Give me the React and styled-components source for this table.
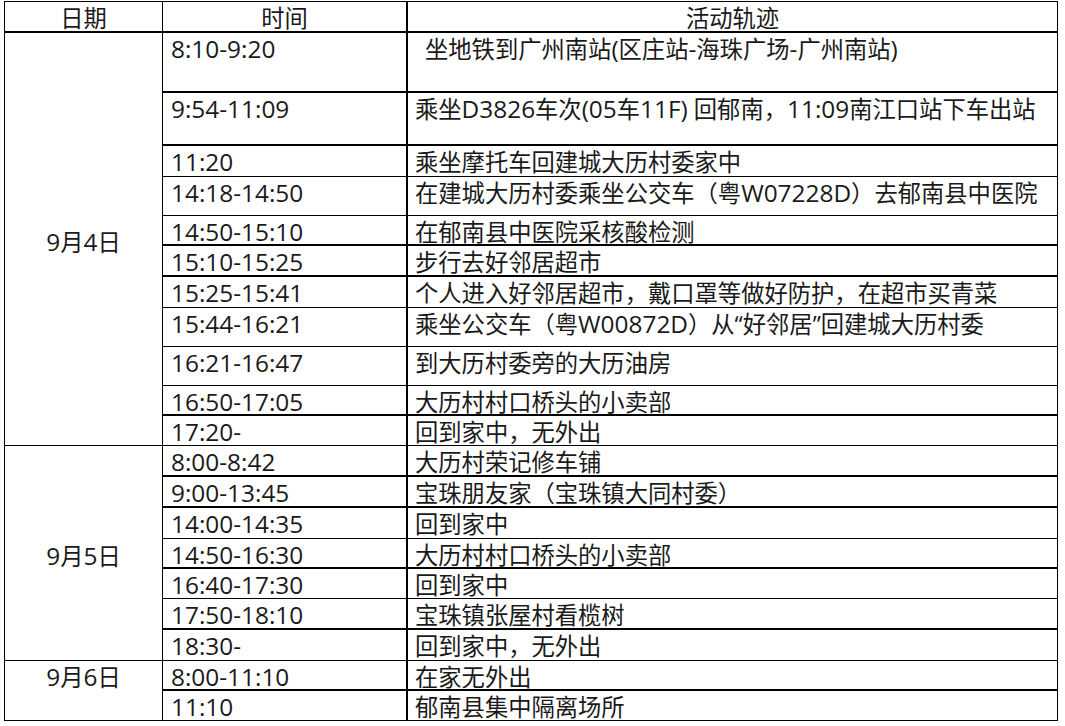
import React from "react";
import styled, { createGlobalStyle } from "styled-components";

const Global = createGlobalStyle`
  html, body { margin: 0; padding: 0; background: #ffffff; }
  body {
    font-family: "Open Sans", "Noto Sans CJK SC", sans-serif;
    color: #1a1a1a;
  }
`;

const Page = styled.div`
  padding: 1px 0 0 4px;
`;

const Table = styled.div`
  display: grid;
  grid-template-columns: 158px 245px 650px;
  grid-template-rows: ${(p) => p.$rows};
  width: max-content;
  border-top: 1px solid #000;
  border-left: 1px solid #000;
  font-size: 23.3px;
  line-height: 30px;
`;

const Cell = styled.div`
  box-sizing: border-box;
  border-right: ${(p) => (p.$col === 2 ? 2 : 1)}px solid #000;
  border-bottom: ${(p) => (p.$thick ? 2 : 1)}px solid #000;
  grid-column: ${(p) => p.$col};
  white-space: nowrap;
  min-height: 0;
`;

const HeadCell = styled(Cell)`
  text-align: center;
  padding-top: 3px;
  line-height: 26px;
`;

const DateCell = styled(Cell)`
  grid-row: span ${(p) => p.$span};
  display: flex;
  justify-content: center;
  align-items: ${(p) => (p.$top ? "flex-start" : "center")};
  padding-top: ${(p) => (p.$top ? 1 : 6)}px;
`;

const TimeCell = styled(Cell)`
  padding: 1px 0 0 8px;
  font-size: 24.4px;
`;

const ActCell = styled(Cell)`
  padding: 1px 0 0 7px;
  text-indent: ${(p) => p.$indent || 0}px;
`;

const Latin = styled.span`
  font-size: 24.4px;
`;

const days = [
  {
    date: "9月4日",
    items: [
      ["8:10-9:20", "坐地铁到广州南站(区庄站-海珠广场-广州南站)", 60, true, 10],
      ["9:54-11:09", "乘坐D3826车次(05车11F) 回郁南，11:09南江口站下车出站", 53, true],
      ["11:20", "乘坐摩托车回建城大历村委家中", 31, false],
      ["14:18-14:50", "在建城大历村委乘坐公交车（粤W07228D）去郁南县中医院", 39, false],
      ["14:50-15:10", "在郁南县中医院采核酸检测", 30, true],
      ["15:10-15:25", "步行去好邻居超市", 31, true],
      ["15:25-15:41", "个人进入好邻居超市，戴口罩等做好防护，在超市买青菜", 31, false],
      ["15:44-16:21", "乘坐公交车（粤W00872D）从“好邻居”回建城大历村委", 39, false],
      ["16:21-16:47", "到大历村委旁的大历油房", 39, false],
      ["16:50-17:05", "大历村村口桥头的小卖部", 30, true],
      ["17:20-", "回到家中，无外出", 30, false],
    ],
  },
  {
    date: "9月5日",
    items: [
      ["8:00-8:42", "大历村荣记修车铺", 31, true],
      ["9:00-13:45", "宝珠朋友家（宝珠镇大同村委）", 31, true],
      ["14:00-14:35", "回到家中", 31, false],
      ["14:50-16:30", "大历村村口桥头的小卖部", 30, true],
      ["16:40-17:30", "回到家中", 30, false],
      ["17:50-18:10", "宝珠镇张屋村看榄树", 31, true],
      ["18:30-", "回到家中，无外出", 31, false],
    ],
  },
  {
    date: "9月6日",
    top: true,
    items: [
      ["8:00-11:10", "在家无外出", 30, true],
      ["11:10", "郁南县集中隔离场所", 30, false],
    ],
  },
];

function renderMixed(text) {
  return text.split(/([A-Za-z0-9:()\-]+)/).map((part, i) =>
    i % 2 === 1 ? <Latin key={i}>{part}</Latin> : part
  );
}

export default function App() {
  const heights = [31];
  days.forEach((d) => d.items.forEach((it) => heights.push(it[2])));
  const rows = heights.map((h) => `${h}px`).join(" ");

  return (
    <Page>
      <Global />
      <Table $rows={rows}>
        <HeadCell $col={1} $thick>日期</HeadCell>
        <HeadCell $col={2} $thick>时间</HeadCell>
        <HeadCell $col={3} $thick>活动轨迹</HeadCell>
        {days.map((d) => (
          <React.Fragment key={d.date}>
            <DateCell $col={1} $span={d.items.length} $top={d.top}>
              {renderMixed(d.date)}
            </DateCell>
            {d.items.map(([time, act, , thick, indent], i) => (
              <React.Fragment key={i}>
                <TimeCell $col={2} $thick={thick}>{time}</TimeCell>
                <ActCell $col={3} $thick={thick} $indent={indent}>
                  {renderMixed(act)}
                </ActCell>
              </React.Fragment>
            ))}
          </React.Fragment>
        ))}
      </Table>
    </Page>
  );
}
